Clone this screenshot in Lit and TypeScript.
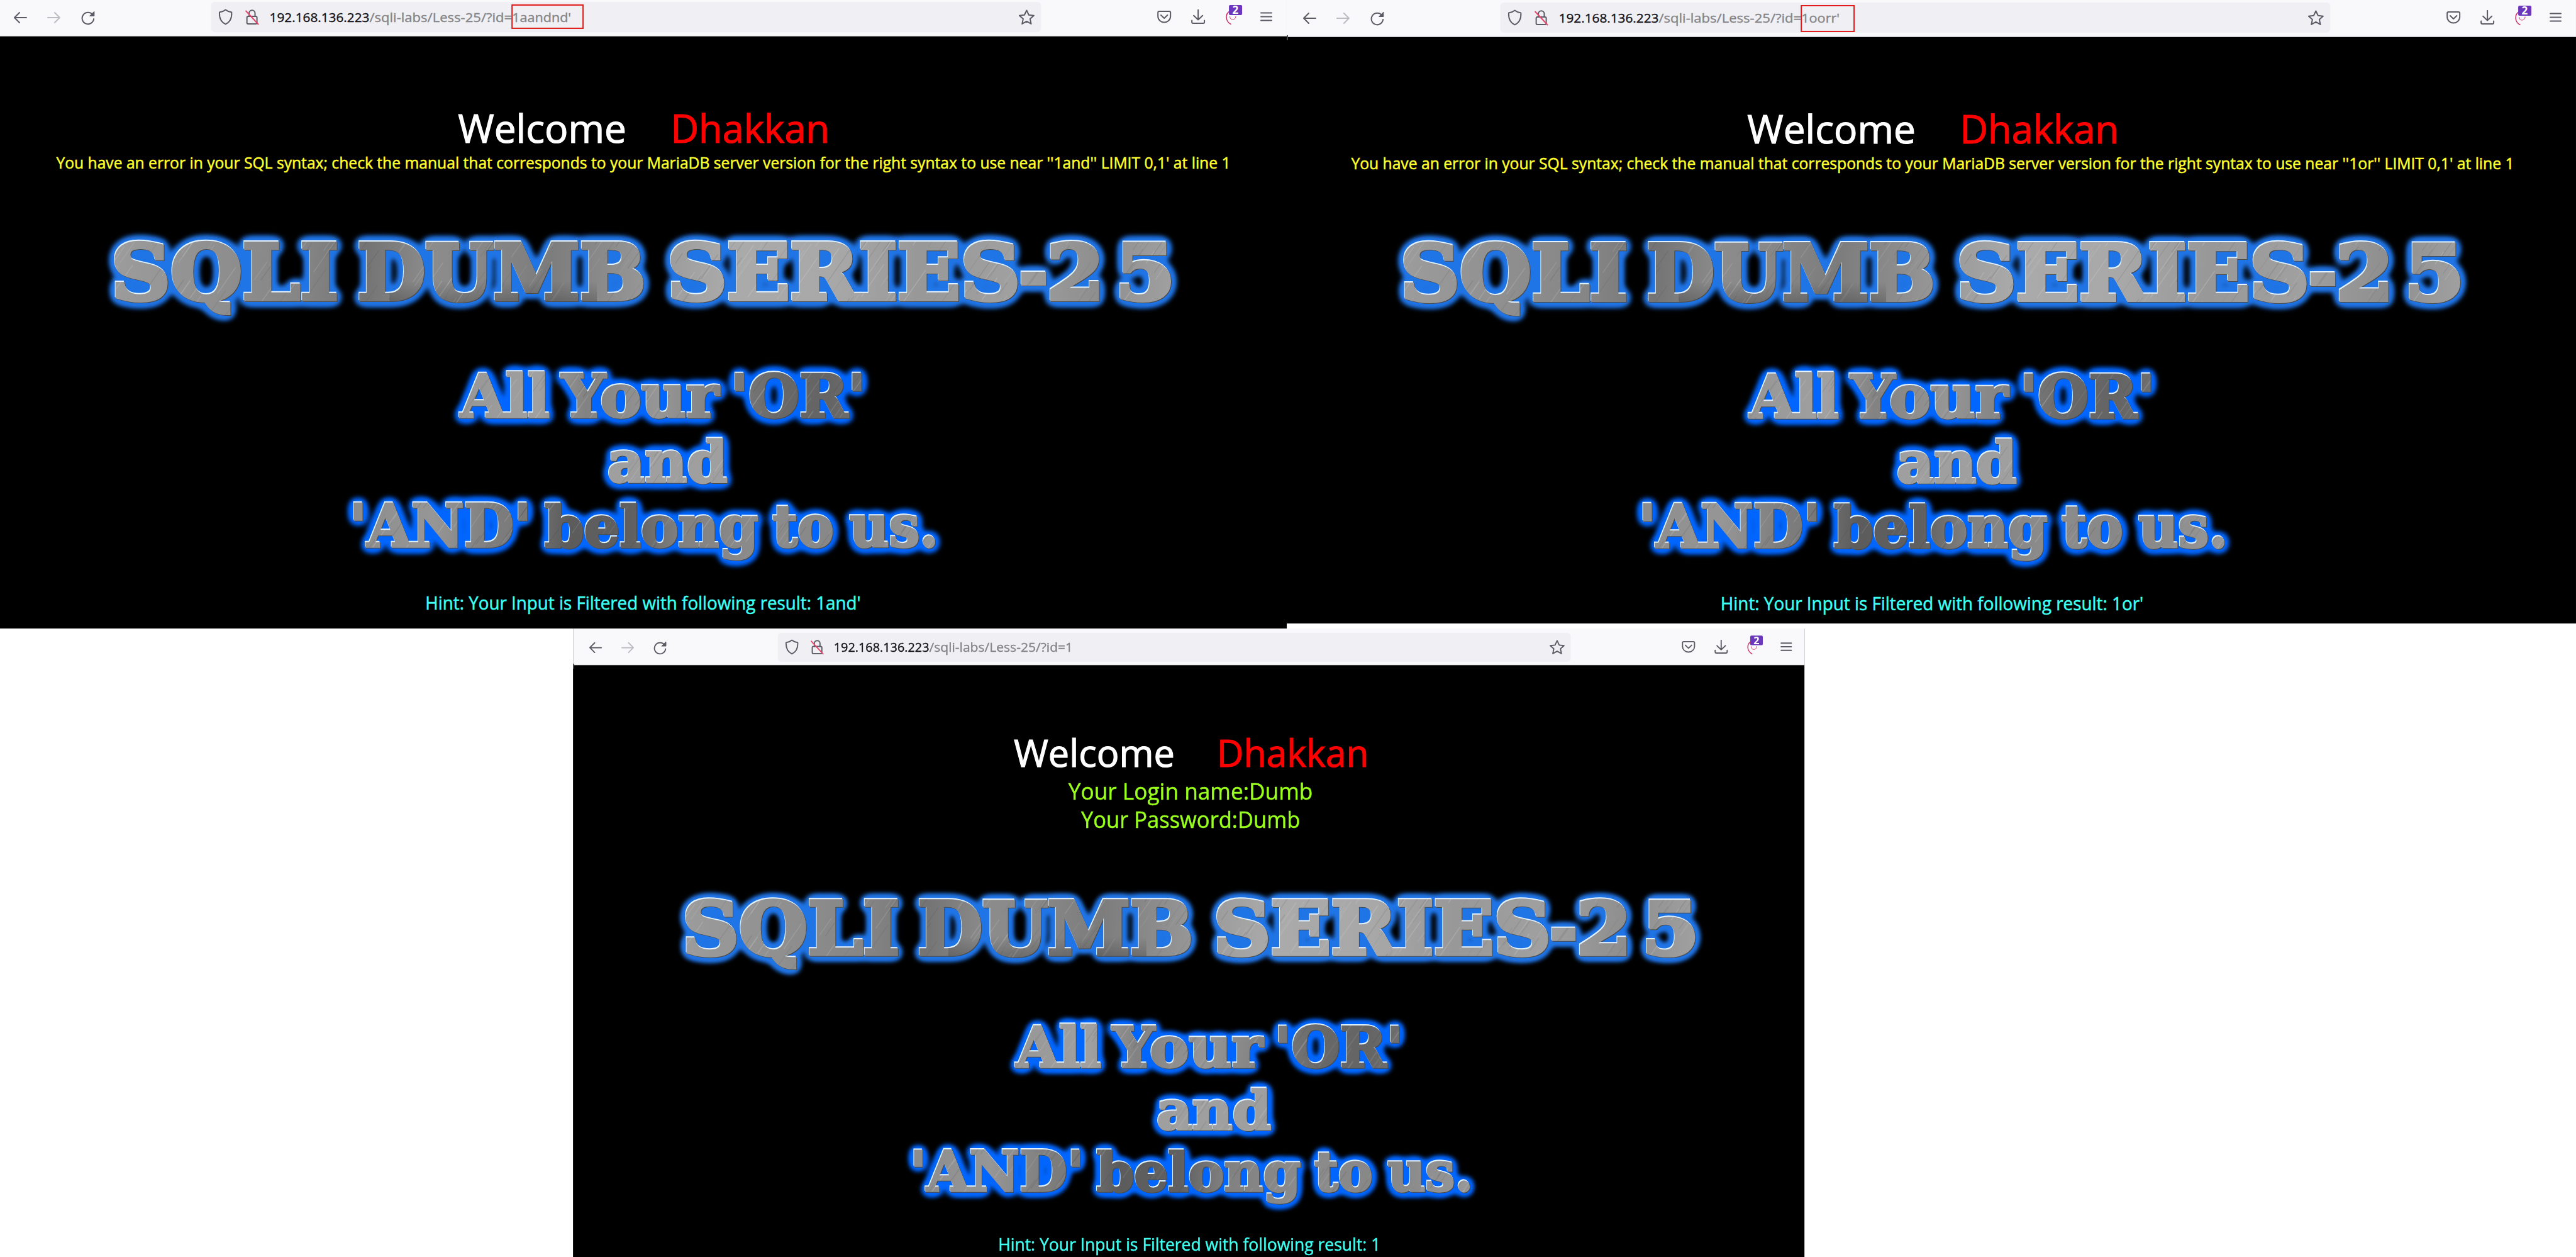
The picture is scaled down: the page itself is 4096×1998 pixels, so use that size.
import { LitElement, html, svg, css, nothing } from "lit";
import { customElement, property } from "lit/decorators.js";

interface Fit {
  text: string;
  x: number;
  y: number;
  w: number;
  size: number;
  fill: string;
}

interface Shot {
  kind: string;
  value: string;
  valueEnd: number;
  mark: boolean;
  messages: Fit[];
  messageHeight: number;
  hint: Fit;
}

const fitted = (t: Fit) => svg`<text x=${t.x} y=${t.y} font-size=${t.size} fill=${t.fill} stroke=${t.fill}
  textLength=${t.w} lengthAdjust="spacingAndGlyphs">${t.text}</text>`;

const word = (text: string, x: number, y: number, w: number, size: number) =>
  svg`<text x=${x} y=${y} font-size=${size} textLength=${w} lengthAdjust="spacingAndGlyphs">${text}</text>`;

/* Fine diagonal scratches for the brushed metal surface. */
const scratches = (() => {
  let seed = 7;
  const rnd = () => (seed = (seed * 16807) % 2147483647) / 2147483647;
  return Array.from({ length: 1500 }, () => ({
    x: Math.round(rnd() * 2100 - 50),
    y: Math.round(rnd() * 680 + 260),
    l: Math.round(15 + rnd() * 50),
    o: (0.06 + rnd() * 0.16).toFixed(2),
    c: rnd() > 0.5 ? "#ffffff" : "#303030",
  }));
})();

@customElement("wordart-banner")
export class WordartBanner extends LitElement {
  static styles = css`
    :host { display: block; }
    svg { display: block; overflow: visible; }
    text {
      font-family: "DejaVu Serif", serif;
      font-weight: 700;
      fill: url(#metal);
      stroke: url(#metal);
      stroke-linejoin: miter;
    }
    .big text { stroke-width: 6px; }
    .small text { stroke-width: 3.5px; }
  `;

  render() {
    const stops = (list: [number, string][]) =>
      list.map(([o, c]) => svg`<stop offset=${o} stop-color=${c}></stop>`);
    const glow = (id: string, color: string) => svg`
      <filter id=${id} filterUnits="userSpaceOnUse" x="100" y="300" width="1850" height="640" color-interpolation-filters="sRGB">
        <feGaussianBlur in="SourceAlpha" stdDeviation="8" result="soft"></feGaussianBlur>
        <feComponentTransfer in="soft" result="ring"><feFuncA type="linear" slope="7" intercept="-0.2"></feFuncA></feComponentTransfer>
        <feGaussianBlur in="ring" stdDeviation="2.5" result="halo"></feGaussianBlur>
        <feFlood flood-color=${color}></feFlood>
        <feComposite in2="halo" operator="in" result="blue"></feComposite>
        <feOffset in="SourceAlpha" dx="-1.5" dy="-2.2" result="up"></feOffset>
        <feFlood flood-color="#e4f3ff"></feFlood>
        <feComposite in2="up" operator="in" result="light"></feComposite>
        <feOffset in="SourceAlpha" dx="1.3" dy="1.5" result="down"></feOffset>
        <feFlood flood-color="#4a4a4a"></feFlood>
        <feComposite in2="down" operator="in" result="dark"></feComposite>
        <feMerge>
          <feMergeNode in="blue"></feMergeNode>
          <feMergeNode in="dark"></feMergeNode>
          <feMergeNode in="light"></feMergeNode>
          <feMergeNode in="SourceGraphic"></feMergeNode>
        </feMerge>
      </filter>`;
    return html`
      <svg width="2044" height="640" viewBox="0 280 2044 640">
        <defs>
          <linearGradient id="m1" gradientUnits="userSpaceOnUse" x1="180" y1="400" x2="1865" y2="480">
            ${stops([[0, "#9c9c9c"], [0.1, "#8f8f8f"], [0.18, "#858585"], [0.24, "#747474"], [0.3, "#8c8c8c"], [0.36, "#868686"], [0.41, "#7c7c7c"], [0.46, "#8a8a8a"], [0.5, "#969696"], [0.58, "#aaaaaa"], [0.68, "#a8a8a8"], [0.76, "#989898"], [0.85, "#a0a0a0"], [0.93, "#8e8e8e"], [1, "#a0a0a0"]])}
          </linearGradient>
          <linearGradient id="m2" gradientUnits="userSpaceOnUse" x1="730" y1="600" x2="1370" y2="640">
            ${stops([[0, "#969696"], [0.2, "#a0a0a0"], [0.32, "#828282"], [0.5, "#969696"], [0.68, "#7c7c7c"], [0.8, "#686868"], [0.92, "#646464"], [1, "#707070"]])}
          </linearGradient>
          <linearGradient id="m3" gradientUnits="userSpaceOnUse" x1="560" y1="800" x2="1490" y2="840">
            ${stops([[0, "#8c8c8c"], [0.14, "#969696"], [0.24, "#7e7e7e"], [0.3, "#787878"], [0.37, "#5c5c5c"], [0.48, "#606060"], [0.56, "#808080"], [0.7, "#8c8c8c"], [0.85, "#868686"], [1, "#989898"]])}
          </linearGradient>
          <linearGradient id="shade" x1="0" y1="0" x2="0" y2="1">
            ${stops([[0, "#00000000"], [0.6, "#00000000"], [1, "#00000044"]])}
          </linearGradient>
          <pattern id="metal" patternUnits="userSpaceOnUse" x="0" y="280" width="2044" height="660" viewBox="0 280 2044 660">
            <rect x="0" y="280" width="2044" height="270" fill="url(#m1)"></rect>
            <rect x="620" y="380" width="330" height="110" fill="url(#shade)"></rect>
            <rect x="0" y="550" width="2044" height="136" fill="url(#m2)"></rect>
            <rect x="0" y="686" width="2044" height="96" fill="#9f9f9f"></rect>
            <rect x="0" y="782" width="2044" height="160" fill="url(#m3)"></rect>
            ${scratches.map((s) => svg`<path d="M${s.x} ${s.y}l${s.l * 0.7} ${-s.l}" stroke=${s.c} stroke-opacity=${s.o} stroke-width="1.2"></path>`)}
          </pattern>
          ${glow("glow1", "#1f74e6")}
          ${glow("glow2", "#0066ff")}
        </defs>
        <g class="big" filter="url(#glow1)">
          ${word("SQLI", 177, 475.5, 362, 122)}
          ${word("DUMB", 569, 475.5, 459, 122)}
          ${word("SERIES", 1062, 475.5, 562, 122)}
          ${word("-", 1622, 475.5, 46, 122)}
          ${word("2", 1666, 475.5, 92, 122)}
          ${word("5", 1775, 475.5, 96, 122)}
        </g>
        <g class="small" filter="url(#glow2)">
          ${word("All", 733, 663, 142, 93)}
          ${word("Your", 894, 663, 250, 93)}
          ${word("'OR'", 1163, 663, 215, 93)}
          ${word("and", 967, 766, 191, 89)}
          ${word("'AND'", 556, 869, 290, 93)}
          ${word("belong", 867, 869, 340, 89)}
          ${word("to", 1230, 869, 97, 91)}
          ${word("us.", 1352, 869, 142, 91)}
        </g>
      </svg>`;
  }
}

@customElement("browser-bar")
export class BrowserBar extends LitElement {
  @property() value = "";
  @property({ type: Number }) valueEnd = 0;
  @property({ type: Boolean }) mark = false;

  static styles = css`
    :host {
      display: flex;
      align-items: flex-start;
      box-sizing: border-box;
      width: 2044px;
      height: 54px;
      font-family: "Open Sans", "Noto Sans", sans-serif;
    }
    svg { display: block; flex: none; fill: none; stroke: #5b5b66; stroke-width: 2; stroke-linecap: round; stroke-linejoin: round; }
    .nav { display: flex; align-items: center; gap: 30px; height: 48px; width: 316px; padding: 4px 0 0 20px; box-sizing: content-box; }
    .nav .off { stroke: #bcbcc2; }
    .url { position: relative; display: flex; align-items: center; box-sizing: border-box; width: 1321px; height: 48px; margin-top: 3px; padding: 0 9px 0 11px; border-radius: 6px; background: #f0f0f4; }
    .lock { margin-left: 18px; }
    .addr { margin-left: 16px; overflow: visible; stroke: none; }
    .addr text { font-size: 20.5px; stroke-width: 0.4; }
    .host { fill: #15141a; stroke: #15141a; }
    .path { fill: #858588; stroke: #858588; }
    .star { margin-left: auto; }
    .mark { position: absolute; left: 478px; top: 4px; box-sizing: border-box; width: 115px; height: 39px; border: 2px solid #e21a1a; }
    .mark.tall { width: 86px; height: 43px; }
    .tools { display: flex; align-items: center; height: 54px; margin-left: 184px; gap: 30px; }
    .badge { stroke: none; fill: #6b37bd; }
    .num { stroke: none; fill: #fff; font-size: 17px; font-weight: 700; }
    .swirl { stroke: #cc2a5e; stroke-width: 1.5; overflow: visible; }
  `;

  render() {
    const start = 431;
    const split = 590;
    const valueStart = 817;
    const tall = this.value === "1oorr'";
    return html`
      <div class="nav">
        <svg width="24" height="24" viewBox="0 0 24 24"><path d="M22 12H3M11 4L3 12l8 8"></path></svg>
        <svg class="off" width="24" height="24" viewBox="0 0 24 24"><path d="M2 12h19M13 4l8 8-8 8"></path></svg>
        <svg width="24" height="24" viewBox="0 0 24 24"><path d="M19.5 7.5A9.3 9.3 0 1 0 21.3 14"></path><path d="M22 2.5v7h-7z" fill="#5b5b66" stroke-width="1"></path></svg>
      </div>
      <div class="url">
        <svg width="24" height="26" viewBox="0 0 24 26"><path d="M12 1.5C9.5 3.6 6 5 2.3 5.6 1.8 13.5 4.8 21 12 24.5 19.2 21 22.2 13.5 21.7 5.6 18 5 14.5 3.6 12 1.5z"></path></svg>
        <svg class="lock" width="24" height="26" viewBox="0 0 24 26"><path d="M7.5 12V7a4.700 4.700 0 0 1 9.400 0v5"></path><rect x="4" y="12" width="16" height="12" rx="2"></rect><path d="M2.500 3.500L22 24.500" stroke="#e6466b"></path></svg>
        <svg class="addr" width="500" height="30" viewBox="431 12 500 30">
          <text class="host" x=${start} y="35" textLength=${split - start} lengthAdjust="spacingAndGlyphs">192.168.136.223</text>
          <text class="path" x=${split} y="35" textLength=${valueStart - split} lengthAdjust="spacingAndGlyphs">/sqli-labs/Less-25/?id=</text>
          <text class="path" x=${valueStart} y="35" textLength=${this.valueEnd - valueStart} lengthAdjust="spacingAndGlyphs">${this.value}</text>
        </svg>
        <svg class="star" width="28" height="26" viewBox="0 0 28 26"><path d="M14 2.500l3.500 7.300 8 .9-6 5.300 1.700 8L14 20l-7.200 4 1.700-8-6-5.300 8-.9z"></path></svg>
        ${this.mark ? html`<div class="mark ${tall ? "tall" : ""}"></div>` : nothing}
      </div>
      <div class="tools">
        <svg width="24" height="24" viewBox="0 0 24 24"><path d="M4 3h16a2 2 0 0 1 2 2v6a10 9.500 0 0 1-20 0V5a2 2 0 0 1 2-2z"></path><path d="M6.800 9l5.200 5 5.200-5"></path></svg>
        <svg width="24" height="24" viewBox="0 0 24 24"><path d="M12 .8v15.500M5 9.800l7 6.700 7-6.700M2 17.500v2.500a2 2 0 0 0 2 2h16a2 2 0 0 0 2-2v-2.500"></path></svg>
        <svg class="swirl" width="26" height="24" viewBox="0 0 26 24">
          <path d="M8 3C1.500 7 .5 18 10 23.500"></path>
          <path d="M8.500 11.500c0 6.500 9.500 6 9.500-.5" stroke-width="1"></path>
          <rect class="badge" x="7" y="-7" width="21" height="16" rx="2"></rect>
          <text class="num" x="12.500" y="7">2</text>
        </svg>
        <svg width="24" height="24" viewBox="0 0 24 24"><path d="M2 5.500h17M2 11.500h17M2 17.500h17"></path></svg>
      </div>`;
  }
}

@customElement("lab-panel")
export class LabPanel extends LitElement {
  @property({ attribute: false }) shot!: Shot;

  static styles = css`
    :host { display: block; }
    .panel { position: relative; box-sizing: border-box; overflow: hidden; background: #000; }
    .first { width: 2048px; height: 1000px; }
    .second { width: 2052px; height: 992px; }
    .third { width: 1960px; height: 1000px; }
    .bar { box-sizing: border-box; background: #f9f9fb; border-bottom: 1px solid #b9b9bb; }
    .first .bar { height: 58px; }
    .second .bar { height: 59px; padding: 1px 0 0 4px; }
    .third .bar { height: 59px; padding: 4px 0 0 5px; border-bottom-color: #3a3a3a; }
    .page { display: flex; flex-direction: column; width: 2044px; }
    .first .page { margin-top: 0; }
    .second .page { margin-left: 4px; margin-top: 0; }
    .third .page { margin-left: 5.500px; margin-top: 0.500px; }
    .third .scaled { zoom: 0.9555; }
    .edge { position: absolute; left: 0; top: 56px; width: 2px; height: 8px; background: #4a4a4c; }
    .line { display: block; overflow: visible; font-family: "Open Sans", "Noto Sans", sans-serif; stroke-width: 0.500px; }
    .head { stroke-width: 1.200px; }
  `;

  render() {
    const s = this.shot;
    return html`
      <div class="panel ${s.kind}">
        <div class="bar"><browser-bar class="scaled" .value=${s.value} .valueEnd=${s.valueEnd} .mark=${s.mark}></browser-bar></div>
        <div class="page scaled">
          <svg class="line head" width="2044" height="178" viewBox="0 57 2044 178">
            ${fitted({ text: "Welcome", x: 729, y: 226, w: 268, size: 63, fill: "#ffffff" })}
            ${fitted({ text: "Dhakkan", x: 1067.5, y: 226, w: 253, size: 63, fill: "#ff0000" })}
          </svg>
          <svg class="line" width="2044" height=${s.messageHeight} viewBox="0 235 2044 ${s.messageHeight}">
            ${s.messages.map(fitted)}
          </svg>
          <wordart-banner></wordart-banner>
          <svg class="line" width="2044" height="80" viewBox="0 920 2044 80">${fitted(s.hint)}</svg>
        </div>
        ${s.kind === "first" ? nothing : html`<div class="edge"></div>`}
      </div>`;
  }
}

const YELLOW = "#ffff2b";
const LIME = "#99ff1c";
const CYAN = "#3dfff2";

const SHOTS: Shot[] = [
  {
    kind: "first",
    value: "1aandnd'",
    valueEnd: 911,
    mark: true,
    messages: [{
      text: "You have an error in your SQL syntax; check the manual that corresponds to your MariaDB server version for the right syntax to use near ''1and'' LIMIT 0,1' at line 1",
      x: 89.5, y: 267, w: 1869, size: 25.5, fill: YELLOW,
    }],
    messageHeight: 45,
    hint: { text: "Hint: Your Input is Filtered with following result: 1and'", x: 677, y: 968.5, w: 693, size: 28.5, fill: CYAN },
  },
  {
    kind: "second",
    value: "1oorr'",
    valueEnd: 878,
    mark: true,
    messages: [{
      text: "You have an error in your SQL syntax; check the manual that corresponds to your MariaDB server version for the right syntax to use near ''1or'' LIMIT 0,1' at line 1",
      x: 98.5, y: 267, w: 1851, size: 25.5, fill: YELLOW,
    }],
    messageHeight: 45,
    hint: { text: "Hint: Your Input is Filtered with following result: 1or'", x: 686.5, y: 968.5, w: 673, size: 28.5, fill: CYAN },
  },
  {
    kind: "third",
    value: "1",
    valueEnd: 829,
    mark: false,
    messages: [
      { text: "Your Login name:Dumb", x: 820, y: 279.7, w: 407, size: 37.5, fill: LIME },
      { text: "Your Password:Dumb", x: 841, y: 326.5, w: 365, size: 37.5, fill: LIME },
    ],
    messageHeight: 107,
    hint: { text: "Hint: Your Input is Filtered with following result: 1", x: 703, y: 969, w: 637, size: 28.5, fill: CYAN },
  },
];

@customElement("app-root")
export class AppRoot extends LitElement {
  static styles = css`
    :host { display: block; width: 4096px; height: 1998px; overflow: hidden; background: #fff; }
    .sheet { display: flex; flex-direction: column; width: 4100px; height: 2000px; transform: scale(0.99902, 0.999); transform-origin: 0 0; }
    .top { display: flex; align-items: flex-start; height: 1000px; }
    .bottom { display: flex; padding-left: 912px; }
  `;

  render() {
    return html`
      <div class="sheet">
        <div class="top">
          <lab-panel .shot=${SHOTS[0]}></lab-panel>
          <lab-panel .shot=${SHOTS[1]}></lab-panel>
        </div>
        <div class="bottom"><lab-panel .shot=${SHOTS[2]}></lab-panel></div>
      </div>`;
  }
}
